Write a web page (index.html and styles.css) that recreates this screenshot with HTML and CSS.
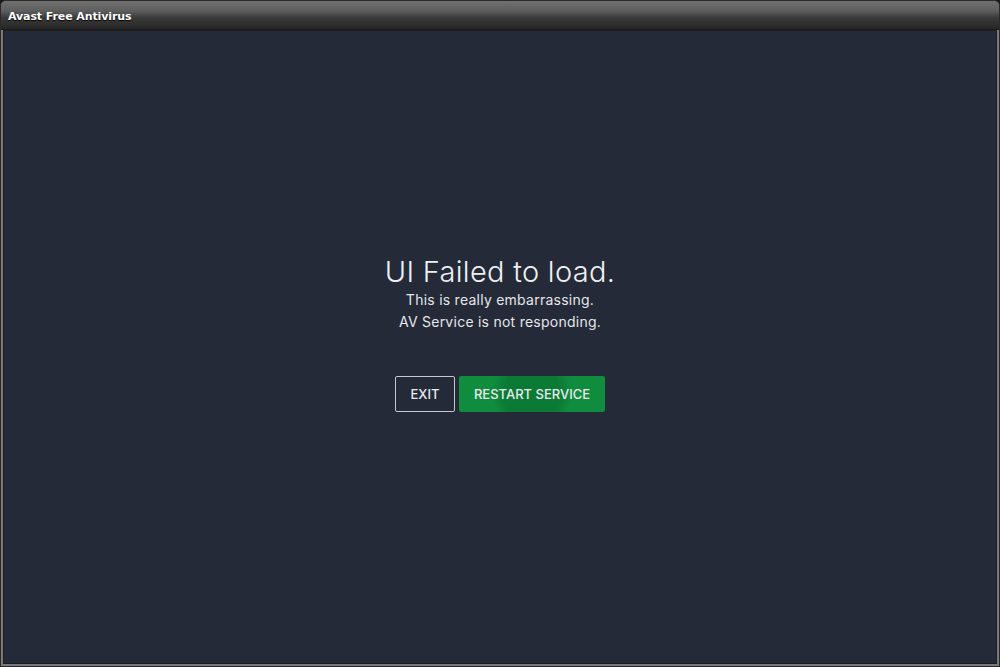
FILE: index.html
```html
<!DOCTYPE html>
<html>
<head>
<meta charset="utf-8">
<link rel="stylesheet" href="styles.css">
</head>
<body>
<div class="window">
  <div class="titlebar"><span class="title">Avast Free Antivirus</span></div>
  <div class="content">
    <div class="message">
      <h1 class="heading">UI Failed to load.</h1>
      <p class="line">This is really embarrassing.</p>
      <p class="line">AV Service is not responding.</p>
      <div class="actions">
        <button class="btn btn-exit">EXIT</button>
        <button class="btn btn-restart">RESTART SERVICE</button>
      </div>
    </div>
  </div>
</div>
</body>
</html>
```
FILE: styles.css
```css
html, body {
  margin: 0;
  padding: 0;
  background: #1a1a1a;
}
.window {
  width: 1000px;
  height: 667px;
  box-sizing: border-box;
  border: 1px solid #2a2a2a;
  border-radius: 6px 6px 0 0;
  background: #7a7a7a;
  padding: 0 2px 2px 2px;
  display: flex;
  flex-direction: column;
  overflow: hidden;
}
.titlebar {
  height: 28px;
  flex: none;
  background: linear-gradient(#707070 0%, #5e5e5e 35%, #3a3a3a 60%, #262626 100%);
  margin: 0 -2px;
  padding: 0 7px;
  display: flex;
  align-items: center;
  border-bottom: 1px solid #1c1c1c;
}
.title {
  font-family: "DejaVu Sans", sans-serif;
  font-weight: bold;
  font-size: 11px;
  color: #ffffff;
  text-shadow: 0 1px 1px #000;
  letter-spacing: -0.1px;
  margin-top: 3px;
}
.content {
  flex: 1;
  background: #242a37;
  border: 1px solid #1e1e1e;
  display: flex;
  justify-content: center;
  padding-top: 224px;
  box-sizing: border-box;
}
.message {
  display: flex;
  flex-direction: column;
  align-items: center;
  color: #e6e8ec;
  font-family: "Inter", "Open Sans", sans-serif;
}
.heading {
  margin: 0;
  font-size: 29px;
  font-weight: 300;
  line-height: 34px;
  color: #eef0f3;
  letter-spacing: 0.3px;
}
.line {
  margin: 0;
  font-size: 14px;
  line-height: 22px;
  color: #e4e6ea;
  letter-spacing: 0.25px;
}
.actions {
  margin-top: 43px;
  display: flex;
  gap: 4px;
}
.btn {
  height: 36px;
  font-family: "Inter", "Open Sans", sans-serif;
  font-size: 13px;
  font-weight: 500;
  color: #e8eaee;
  border-radius: 2px;
  cursor: pointer;
  box-sizing: border-box;
}
.btn-exit {
  width: 60px;
  background: transparent;
  border: 1px solid #c6c8cc;
}
.btn-restart {
  width: 146px;
  border: none;
  background: radial-gradient(ellipse 40px 40px at 50% 50%, #0b7a34 0%, #0b7a34 70%, #108c3e 100%);
  background-color: #108c3e;
}
```
